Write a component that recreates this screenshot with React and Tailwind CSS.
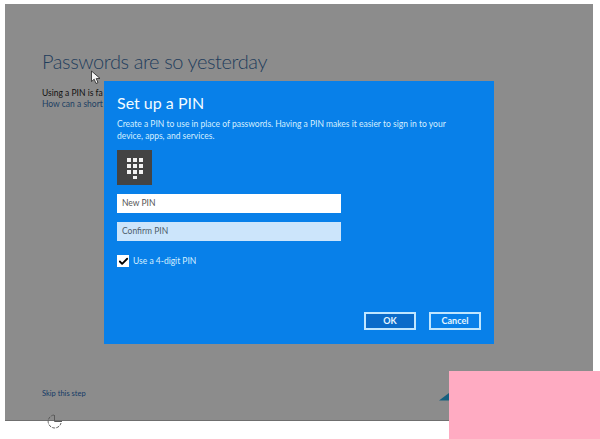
import { Check } from 'lucide-react';

const keys = [0, 1, 2, 3, 4, 5, 6, 7, 8];

function KeypadIcon() {
  return (
    <div className="w-[35px] h-[35px] bg-[#434343] flex flex-col items-center pt-[8px]">
      <div className="grid grid-cols-3 gap-[2px]">
        {keys.map((k) => (
          <span key={k} className="w-[4px] h-[4px] bg-[#f2f2f2]" />
        ))}
      </div>
      <span className="w-[4px] h-[3px] bg-[#f2f2f2] mt-[2px]" />
    </div>
  );
}

function Cursor() {
  return (
    <svg className="absolute left-[90px] top-[70px]" width="12" height="15" viewBox="0 0 12 15">
      <path d="M1.5 1 L1.5 11.5 L4.2 9.2 L6 13.5 L8 12.6 L6.2 8.6 L10 8.4 Z" fill="#f4f4f4" stroke="#222" strokeWidth="0.8" />
    </svg>
  );
}

function Spinner() {
  return (
    <svg className="absolute left-[47px] top-[413px]" width="16" height="17" viewBox="0 0 16 17" fill="none" stroke="#5a5a5a" strokeWidth="1">
      <path d="M7 2 A6.5 6.5 0 1 0 14 10" strokeDasharray="3 1.2" />
      <path d="M7.5 2 V8.5 H15" />
    </svg>
  );
}

export default function App() {
  return (
    <div className="relative w-[600px] h-[439px] bg-white overflow-hidden pl-[5px] pt-[4px] font-['Lato','Noto_Sans',sans-serif]">
      <div className="w-[588px] h-[417px] bg-[#8c8c8c] border-b border-[#6f6f6f] flex flex-col pl-[37px]">
        <h1 className="mt-[44px] text-[20px] leading-[27px] font-light tracking-[-0.4px] text-[#1f3d5c]">Passwords are so yesterday</h1>
        <p className="mt-[13px] text-[8.5px] leading-[11px] text-[#111]">Using a PIN is fa</p>
        <a className="text-[8.5px] leading-[11px] text-[#1c3f63]">How can a short</a>
        <a className="mt-auto mb-[21px] text-[7.5px] leading-[10px] text-[#143a66]">Skip this step</a>
      </div>

      <Cursor />
      <Spinner />

      {/* blue dialog */}
      <div className="absolute left-[104px] top-[81px] w-[390px] h-[263px] bg-[#0880e9] flex flex-col pl-[13px] pr-[13px] text-white">
        <h2 className="mt-[11px] text-[16px] leading-[22px] text-[#f2fbff]">Set up a PIN</h2>
        <p className="mt-[4px] w-[340px] text-[8.5px] leading-[12px] text-[#d5efff]">
          Create a PIN to use in place of passwords. Having a PIN makes it easier to sign in to your device, apps, and services.
        </p>
        <div className="mt-[8px]">
          <KeypadIcon />
        </div>
        <div className="mt-[9px] w-[224px] h-[19px] bg-white flex items-center pl-[5px] text-[8.5px] text-[#555]">New PIN</div>
        <div className="mt-[9px] w-[224px] h-[19px] bg-[#cce5fb] flex items-center pl-[5px] text-[8.5px] text-[#4d5d6b]">Confirm PIN</div>
        <label className="mt-[14px] flex items-center gap-[4px] text-[8.5px] text-[#d5efff]">
          <span className="w-[12px] h-[12px] bg-white flex items-center justify-center">
            <Check size={11} strokeWidth={4} color="#000" />
          </span>
          Use a 4-digit PIN
        </label>
        <div className="mt-auto mb-[14px] flex justify-end gap-[13px]">
          <button className="w-[52px] h-[18px] border-2 border-[#bfe6ff] bg-[#0a6bc9] text-[9px] font-bold text-[#e6f6ff]">OK</button>
          <button className="w-[52px] h-[18px] border-2 border-[#bfe6ff] text-[9px] font-bold text-[#e6f6ff]">Cancel</button>
        </div>
      </div>

      {/* next arrow peeking out from under the pink block */}
      <svg className="absolute left-[439px] top-[393px]" width="10" height="8" viewBox="0 0 10 8">
        <path d="M0 7.5 L10 0 V7.5 Z" fill="#16607f" />
      </svg>

      <div className="absolute left-[449px] top-[371px] w-[151px] h-[68px] bg-[#ffabc2]" />
    </div>
  );
}
